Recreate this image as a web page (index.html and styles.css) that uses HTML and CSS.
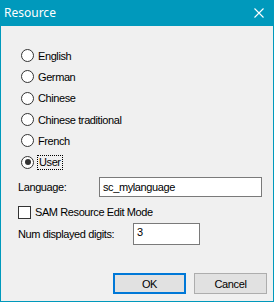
FILE: index.html
```html
<!DOCTYPE html>
<html lang="en">
<head>
  <meta charset="UTF-8">
  <title>Resource</title>
  <link rel="stylesheet" href="styles.css">
</head>
<body>
  <div class="window">
    <div class="titlebar">
      <span class="title">Resource</span>
      <svg class="close" width="10" height="10" viewBox="0 0 10 10">
        <path d="M0.5 0.5 L9.5 9.5 M9.5 0.5 L0.5 9.5" stroke="#fff" stroke-width="1.1"/>
      </svg>
    </div>

    <div class="content">
      <div class="radios">
        <label class="radio"><span class="dot"></span>English</label>
        <label class="radio"><span class="dot"></span>German</label>
        <label class="radio"><span class="dot"></span>Chinese</label>
        <label class="radio"><span class="dot"></span>Chinese traditional</label>
        <label class="radio"><span class="dot"></span>French</label>
        <label class="radio checked"><span class="dot"></span><span class="focus">User</span></label>
      </div>

      <div class="field lang-row">
        <span class="label">Language:</span>
        <div class="textbox lang-box">sc_mylanguage</div>
      </div>

      <label class="check">
        <span class="box"></span>SAM Resource Edit Mode
      </label>

      <div class="field digits-row">
        <span class="label">Num displayed digits:</span>
        <div class="textbox digits-box">3</div>
      </div>
    </div>

    <div class="buttons">
      <button class="btn default">OK</button>
      <button class="btn">Cancel</button>
    </div>
  </div>
</body>
</html>
```

FILE: styles.css
```css
body {
  margin: 0;
  background: #f0f0f0;
  font-family: "Liberation Sans", Arial, sans-serif;
  font-size: 11px;
  letter-spacing: -0.4px;
  color: #000;
}
.window {
  width: 274px;
  height: 302px;
  box-sizing: border-box;
  border: 1px solid #0099bc;
  border-top: none;
  background: #f0f0f0;
  display: flex;
  flex-direction: column;
}
.titlebar {
  height: 26px;
  margin: 0 -1px;
  background: #0099bc;
  display: flex;
  align-items: center;
  justify-content: space-between;
  padding: 0 10px 0 4px;
}
.title {
  color: #fff;
  font-family: "Noto Sans", "Open Sans", sans-serif;
  font-size: 12px;
  letter-spacing: 0;
  margin-top: -1px;
}
.close {
  margin-top: -1px;
}
.content {
  padding: 19px 11px 0 17px;
  flex: 1;
}
.radios {
  padding-left: 3px;
}
.radio {
  height: 21.3px;
  display: flex;
  align-items: center;
}
.dot {
  width: 11px;
  height: 11px;
  border: 1px solid #333;
  border-radius: 50%;
  background: #fff;
  margin-right: 4px;
  position: relative;
}
.checked .dot::after {
  content: "";
  position: absolute;
  left: 2.5px;
  top: 2.5px;
  width: 6px;
  height: 6px;
  border-radius: 50%;
  background: #333;
}
.focus {
  outline: 1px dotted #000;
  padding: 0 1px;
  line-height: 13px;
}
.field {
  display: flex;
  align-items: center;
}
.label {
  flex: none;
}
.lang-row {
  margin-top: 4px;
}
.lang-row .label {
  width: 81px;
}
.textbox {
  background: #fff;
  border: 1px solid #7a7a7a;
  box-sizing: border-box;
  padding: 0 3px;
}
.lang-box {
  width: 164px;
  height: 20px;
  line-height: 18px;
}
.check {
  display: flex;
  align-items: center;
  margin-top: 8px;
  height: 15px;
}
.box {
  width: 13px;
  height: 13px;
  box-sizing: border-box;
  border: 1px solid #333;
  background: #fff;
  margin-right: 4px;
}
.digits-row {
  margin-top: 3px;
}
.digits-row .label {
  width: 115px;
}
.digits-box {
  width: 67px;
  height: 22px;
  line-height: 16px;
}
.buttons {
  display: flex;
  justify-content: flex-end;
  gap: 8px;
  padding: 0 6px 7px 0;
}
.btn {
  width: 73px;
  height: 21px;
  box-sizing: border-box;
  background: #e1e1e1;
  border: 1px solid #adadad;
  font-family: "Liberation Sans", Arial, sans-serif;
  font-size: 11px;
  letter-spacing: -0.4px;
  padding: 0;
  color: #000;
}
.btn.default {
  border: 2px solid #0078d7;
}
```
